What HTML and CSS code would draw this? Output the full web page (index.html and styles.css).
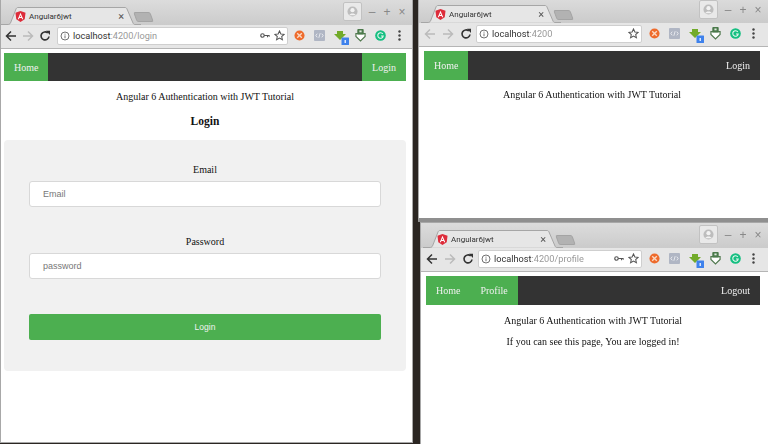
FILE: index.html
```html
<!DOCTYPE html>
<html lang="en">
<head>
<meta charset="utf-8">
<title>Angular6jwt</title>
<link rel="stylesheet" href="styles.css">
</head>
<body>
<svg class="defs" width="0" height="0" aria-hidden="true">
  <symbol id="i-tab" viewBox="0 0 140 18"><path d="M0 17.500H7C8 17.500 9 17 9.500 16L15 2C15.500 .9 16 .5 17 .5H124C125 .5 125.500 1 126 2L132 16C132.500 17 133 17.500 134 17.500H140" fill="#e6e6e6" stroke="#a6a6a6"/></symbol>
  <symbol id="i-ng" viewBox="0 0 12 12"><path d="M6 0 .5 2l.9 7L6 12l4.600-3 .9-7z" fill="#dd2c3a"/><path d="M6 2 3 9h1.200l.6-1.500h2.400L7.800 9H9zM5.200 6.500 6 4.500l.8 2z" fill="#fff"/></symbol>
  <symbol id="i-back" viewBox="0 0 12 12"><path d="M11 6H2M6 1.500 1.500 6 6 10.500" fill="none" stroke="currentColor" stroke-width="1.500"/></symbol>
  <symbol id="i-fwd" viewBox="0 0 12 12"><path d="M1 6h9M6 1.500 10.500 6 6 10.500" fill="none" stroke="currentColor" stroke-width="1.500"/></symbol>
  <symbol id="i-reload" viewBox="0 0 12 12"><path d="M10 6.500A4 4 0 1 1 8.800 3" fill="none" stroke="currentColor" stroke-width="1.600"/><path d="M7 .8 11 .8 11 5z" fill="currentColor"/></symbol>
  <symbol id="i-info" viewBox="0 0 12 12"><circle cx="6" cy="6" r="4.800" fill="none" stroke="#555" stroke-width="1"/><path d="M6 5.300v3.400M6 3.200v1.200" stroke="#555" stroke-width="1"/></symbol>
  <symbol id="i-key" viewBox="0 0 12 8"><circle cx="3" cy="4" r="2.100" fill="none" stroke="#555" stroke-width="1.400"/><path d="M5 4h6.500M9 4v2M11 4v1.600" stroke="#555" stroke-width="1.300" fill="none"/></symbol>
  <symbol id="i-star" viewBox="0 0 12 12"><path d="m6 1 1.500 3.300 3.600.4-2.700 2.400.8 3.600L6 8.900l-3.200 1.800.8-3.600L.9 4.700l3.600-.4z" fill="none" stroke="#555" stroke-width="1.100"/></symbol>
  <symbol id="i-orange" viewBox="0 0 12 12"><circle cx="6" cy="6" r="5.500" fill="#ee6b2c"/><path d="m3.500 3.500 5 5m0-5-5 5" stroke="#fbd9c4" stroke-width="1.500"/></symbol>
  <symbol id="i-code" viewBox="0 0 12 12"><rect width="12" height="12" rx="1" fill="#b0b6c4"/><path d="M3.500 4 2 6l1.500 2M8.500 4 10 6 8.500 8M6.700 3.500l-1.400 5" fill="none" stroke="#f2f3f6" stroke-width=".9"/></symbol>
  <symbol id="i-dl" viewBox="0 0 15 15"><path d="M3 1h6v3h3L6 10 0 4h3z" fill="#72ab2a"/><rect x="7.500" y="7.500" width="7.500" height="7.500" rx=".5" fill="#3f82ec"/><rect x="10.500" y="10" width="1.500" height="3" fill="#dce8fb"/></symbol>
  <symbol id="i-shield" viewBox="0 0 12 14"><path d="M1 5h10v3l-5 5-5-5z" fill="#fff" stroke="#51794f" stroke-width="1.300"/><rect x="2.500" y="0" width="7" height="6" rx="1" fill="#4b7a4b"/><rect x="4.800" y="1.500" width="2.400" height="2" fill="#dfe9df"/></symbol>
  <symbol id="i-g" viewBox="0 0 12 12"><circle cx="6" cy="6" r="5.800" fill="#15bf81"/><path d="M8.500 4.200A3 3 0 1 0 9 6.500H6.500" fill="none" stroke="#e8f8f1" stroke-width="1.200"/></symbol>
  <symbol id="i-dots" viewBox="0 0 3 11"><circle cx="1.500" cy="1.500" r="1.200" fill="#444"/><circle cx="1.500" cy="5.500" r="1.200" fill="#444"/><circle cx="1.500" cy="9.500" r="1.200" fill="#444"/></symbol>
  <symbol id="i-user" viewBox="0 0 12 12"><circle cx="6" cy="6" r="5.500" fill="#bdbdbd"/><circle cx="6" cy="4.500" r="2.300" fill="#f2f2f2"/><path d="M2.500 10c.5-2.500 6.500-2.500 7 0" fill="#f2f2f2"/></symbol>
</svg>

<main class="desktop">
  <section class="win win-login">
    <header class="titlebar">
      <div class="tab">
        <svg class="tab-shape"><use href="#i-tab"/></svg>
        <svg class="fav"><use href="#i-ng"/></svg>
        <span class="tab-title">Angular6jwt</span>
        <span class="tab-x">×</span>
      </div>
      <span class="newtab"></span>
      <span class="winbtns">
        <span class="profile"><svg><use href="#i-user"/></svg></span>
        <span class="ctl">–</span><span class="ctl">+</span><span class="ctl">×</span>
      </span>
    </header>
    <div class="toolbar">
      <svg class="nav-ic dark"><use href="#i-back"/></svg>
      <svg class="nav-ic faint"><use href="#i-fwd"/></svg>
      <svg class="nav-ic dark"><use href="#i-reload"/></svg>
      <div class="omni">
        <svg class="info"><use href="#i-info"/></svg>
        <span class="url"><b>localhost</b>:4200/login</span>
        <svg class="key"><use href="#i-key"/></svg>
        <svg class="star"><use href="#i-star"/></svg>
      </div>
      <div class="exts">
        <svg class="ext"><use href="#i-orange"/></svg>
        <svg class="ext"><use href="#i-code"/></svg>
        <svg class="ext dl"><use href="#i-dl"/></svg>
        <svg class="ext shield"><use href="#i-shield"/></svg>
        <svg class="ext"><use href="#i-g"/></svg>
        <svg class="dots"><use href="#i-dots"/></svg>
      </div>
    </div>
    <div class="page">
      <nav class="navbar">
        <a class="link on">Home</a>
        <a class="link on push">Login</a>
      </nav>
      <h3 class="site-title">Angular 6 Authentication with JWT Tutorial</h3>
      <h2 class="form-title">Login</h2>
      <form class="card">
        <label class="lbl">Email</label>
        <span class="field">Email</span>
        <label class="lbl lbl-pw">Password</label>
        <span class="field">password</span>
        <span class="submit">Login</span>
      </form>
    </div>
  </section>

  <section class="win win-home">
    <header class="titlebar">
      <div class="tab">
        <svg class="tab-shape"><use href="#i-tab"/></svg>
        <svg class="fav"><use href="#i-ng"/></svg>
        <span class="tab-title">Angular6jwt</span>
        <span class="tab-x">×</span>
      </div>
      <span class="newtab"></span>
      <span class="winbtns">
        <span class="profile"><svg><use href="#i-user"/></svg></span>
        <span class="ctl">–</span><span class="ctl">+</span><span class="ctl">×</span>
      </span>
    </header>
    <div class="toolbar">
      <svg class="nav-ic faint"><use href="#i-back"/></svg>
      <svg class="nav-ic faint"><use href="#i-fwd"/></svg>
      <svg class="nav-ic dark"><use href="#i-reload"/></svg>
      <div class="omni">
        <svg class="info"><use href="#i-info"/></svg>
        <span class="url"><b>localhost</b>:4200</span>
        <svg class="star"><use href="#i-star"/></svg>
      </div>
      <div class="exts">
        <svg class="ext"><use href="#i-orange"/></svg>
        <svg class="ext"><use href="#i-code"/></svg>
        <svg class="ext dl"><use href="#i-dl"/></svg>
        <svg class="ext shield"><use href="#i-shield"/></svg>
        <svg class="ext"><use href="#i-g"/></svg>
        <svg class="dots"><use href="#i-dots"/></svg>
      </div>
    </div>
    <div class="page">
      <nav class="navbar">
        <a class="link on">Home</a>
        <a class="link push">Login</a>
      </nav>
      <h3 class="site-title">Angular 6 Authentication with JWT Tutorial</h3>
    </div>
  </section>

  <section class="win win-profile">
    <header class="titlebar">
      <div class="tab">
        <svg class="tab-shape"><use href="#i-tab"/></svg>
        <svg class="fav"><use href="#i-ng"/></svg>
        <span class="tab-title">Angular6jwt</span>
        <span class="tab-x">×</span>
      </div>
      <span class="newtab"></span>
      <span class="winbtns">
        <span class="profile"><svg><use href="#i-user"/></svg></span>
        <span class="ctl">–</span><span class="ctl">+</span><span class="ctl">×</span>
      </span>
    </header>
    <div class="toolbar">
      <svg class="nav-ic dark"><use href="#i-back"/></svg>
      <svg class="nav-ic faint"><use href="#i-fwd"/></svg>
      <svg class="nav-ic dark"><use href="#i-reload"/></svg>
      <div class="omni">
        <svg class="info"><use href="#i-info"/></svg>
        <span class="url"><b>localhost</b>:4200/profile</span>
        <svg class="key"><use href="#i-key"/></svg>
        <svg class="star"><use href="#i-star"/></svg>
      </div>
      <div class="exts">
        <svg class="ext"><use href="#i-orange"/></svg>
        <svg class="ext"><use href="#i-code"/></svg>
        <svg class="ext dl"><use href="#i-dl"/></svg>
        <svg class="ext shield"><use href="#i-shield"/></svg>
        <svg class="ext"><use href="#i-g"/></svg>
        <svg class="dots"><use href="#i-dots"/></svg>
      </div>
    </div>
    <div class="page">
      <nav class="navbar">
        <a class="link on">Home</a>
        <a class="link on">Profile</a>
        <a class="link push">Logout</a>
      </nav>
      <h3 class="site-title">Angular 6 Authentication with JWT Tutorial</h3>
      <p class="logged">If you can see this page, You are logged in!</p>
    </div>
  </section>
</main>
</body>
</html>
```

FILE: styles.css
```css
* { box-sizing: border-box; }
html, body { margin: 0; height: 100%; overflow: hidden; }
body { background: #2b2622; font-family: "Liberation Serif", serif; }
.defs { position: absolute; }
.desktop { position: relative; width: 768px; height: 444px; filter: blur(.4px); overflow: hidden; }

/* browser windows sit on a free desktop canvas */
.win {
  position: absolute;
  display: flex;
  flex-direction: column;
  background: #fff;
  border: 1px solid #a8a8a8;
  overflow: hidden;
}
.win-login { left: 0; top: -1px; width: 413px; height: 444px; }
.win-home { left: 418px; top: -3px; width: 351px; height: 225px; border-bottom: 4px solid #8f8f8f; }
.win-profile { left: 420px; top: 222px; width: 349px; height: 224px; }

.titlebar {
  flex: none;
  height: 25px;
  display: flex;
  align-items: flex-end;
  background: linear-gradient(#dcdcdc, #cbcbcb);
}
.win-home .titlebar, .win-profile .titlebar { padding-left: 2px; }
.tab { position: relative; width: 134px; height: 18px; display: flex; align-items: center; flex: none; font-family: "Roboto", sans-serif; }
.tab-shape { position: absolute; left: 0; top: 0; width: 140px; height: 18px; }
.fav { position: relative; margin-left: 14px; width: 11px; height: 11px; }
.tab-title { position: relative; margin-left: 3px; font-size: 8px; color: #333; }
.tab-x { position: relative; margin-left: auto; margin-right: 11px; font-size: 11px; color: #555; }
.newtab { width: 17px; height: 10px; margin: 0 0 3px 0; background: #b2b2b2; border: 1px solid #a4a4a4; border-radius: 2px; transform: skewX(20deg); }
.winbtns { margin-left: auto; align-self: flex-start; display: flex; align-items: center; gap: 5px; padding: 2px 5px 0 0; }
.profile { width: 19px; height: 19px; display: flex; align-items: center; justify-content: center; background: #e9e9e9; border: 1px solid #c2c2c2; border-radius: 2px; }
.profile svg { width: 11px; height: 11px; }
.ctl { width: 10px; text-align: center; font: 12px "Liberation Sans", sans-serif; color: #888; }

.toolbar {
  flex: none;
  height: 24px;
  display: flex;
  align-items: center;
  padding: 0 6px 2px 4px;
  gap: 5px;
  background: #e6e6e6;
  border-bottom: 1px solid #b5b5b5;
}
.win-home .toolbar, .win-profile .toolbar { padding-left: 5px; gap: 6px; }
.nav-ic { width: 12px; height: 12px; flex: none; }
.dark { color: #333; }
.faint { color: #bbb; }
.omni {
  flex: none;
  width: 231px;
  height: 18px;
  margin-left: 1px;
  display: flex;
  align-items: center;
  gap: 3px;
  padding: 0 2px;
  background: #fff;
  border: 1px solid #cfcfcf;
  border-radius: 2px;
  font: 9px "Roboto", sans-serif;
}
.win-home .omni { width: 166px; margin-left: -2px; }
.win-profile .omni { width: 164px; margin-left: -2px; }
.info { width: 10px; height: 10px; flex: none; }
.url { color: #999; white-space: nowrap; font-size: 9.200px; }
.url b { font-weight: 400; color: #333; }
.key { width: 10px; height: 7px; margin-left: auto; margin-right: 1px; flex: none; }
.star { width: 11px; height: 11px; flex: none; }
.url + .star { margin-left: auto; }
.exts { flex: 1; display: flex; align-items: center; gap: 9px; padding: 0 5.500px 0 .5px; }
.win-home .exts, .win-profile .exts { padding-right: 7.500px; }
.ext { width: 11px; height: 11px; flex: none; }
.dl { width: 15px; height: 15px; margin: 3px -3px 0 0; }
.shield { width: 11px; height: 13px; }
.dots { width: 3px; height: 11px; flex: none; margin-left: auto; }

.page { flex: 1; display: flex; flex-direction: column; padding: 4px 6px 0 3px; }
.win-home .page, .win-profile .page { padding: 4px 8px 0 5px; }
.navbar { flex: none; height: 28px; display: flex; background: #333; color: #f0f0f0; font-size: 10px; }
.win-home .navbar, .win-profile .navbar { height: 29px; }
.link { display: flex; align-items: center; padding: 0 10px; }
.on { background: #4caf50; }
.push { margin-left: auto; }
.site-title { margin: 9px 0 0; text-align: center; font-size: 10px; font-weight: 400; line-height: 14px; color: #111; }
.win-home .site-title { margin-top: 8px; }
.form-title { margin: 10px 0 0; text-align: center; font-size: 11.500px; line-height: 15px; color: #111; }
.logged { margin: 7px 0 0; text-align: center; font-size: 10px; line-height: 14px; color: #111; }

.card { margin-top: 11px; height: 231px; display: flex; flex-direction: column; padding: 23px 25px 0; background: #f1f1f1; border-radius: 4px; }
.lbl { text-align: center; font-size: 10px; line-height: 14px; color: #111; }
.lbl-pw { margin-top: 28px; }
.field { margin-top: 4px; height: 26px; display: flex; align-items: center; padding-left: 13px; background: #fff; border: 1px solid #d8d8d8; border-radius: 3px; font: 9px "Liberation Sans", sans-serif; color: #777; }
.submit { margin-top: 35px; height: 26px; display: flex; align-items: center; justify-content: center; background: #4caf50; border-radius: 2px; font: 8.500px "Liberation Sans", sans-serif; color: #f2f2f2; }
```
